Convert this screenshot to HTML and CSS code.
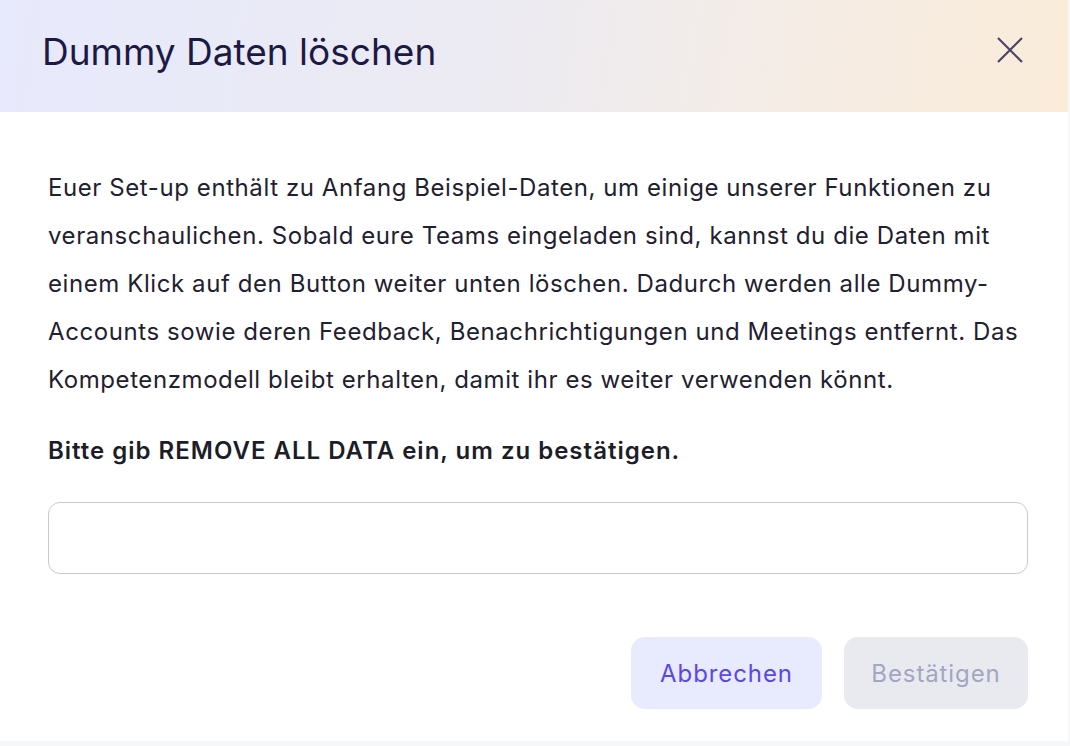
FILE: index.html
```html
<!DOCTYPE html>
<html lang="de">
<head>
<meta charset="utf-8">
<title>Dummy Daten löschen</title>
<link rel="stylesheet" href="styles.css">
</head>
<body>
<div class="modal">
  <header class="modal-header">
    <h1 class="modal-title">Dummy Daten löschen</h1>
    <button class="close-btn" aria-label="Schließen">
      <svg width="26" height="26" viewBox="0 0 26 26"><path d="M1 1L25 25M25 1L1 25" stroke="#4a4568" stroke-width="2.2" fill="none"/></svg>
    </button>
  </header>
  <div class="modal-body">
    <p class="desc">Euer Set-up enthält zu Anfang Beispiel-Daten, um einige unserer Funktionen zu<br>veranschaulichen. Sobald eure Teams eingeladen sind, kannst du die Daten mit<br>einem Klick auf den Button weiter unten löschen. Dadurch werden alle Dummy-<br>Accounts sowie deren Feedback, Benachrichtigungen und Meetings entfernt. Das<br>Kompetenzmodell bleibt erhalten, damit ihr es weiter verwenden könnt.</p>
    <p class="confirm-label">Bitte gib REMOVE ALL DATA ein, um zu bestätigen.</p>
    <input class="confirm-input" type="text">
    <div class="actions">
      <button class="btn btn-cancel">Abbrechen</button>
      <button class="btn btn-confirm" disabled>Bestätigen</button>
    </div>
  </div>
</div>
</body>
</html>
```
FILE: styles.css
```css
* { box-sizing: border-box; }
html, body { margin: 0; padding: 0; }
body {
  background: #f6f7f9;
  font-family: Inter, "Noto Sans", sans-serif;
  width: 1070px;
  height: 746px;
  overflow: hidden;
}
.modal {
  width: 1068px;
  height: 741px;
  background: #ffffff;
  display: flex;
  flex-direction: column;
}
.modal-header {
  height: 112px;
  flex: none;
  background: linear-gradient(100deg, #e7e9fc 0%, #ecebf3 45%, #f6ece2 80%, #fbecd9 100%);
  display: flex;
  align-items: flex-start;
  justify-content: space-between;
  padding: 33px 45px 0 42px;
}
.modal-title {
  margin: 0;
  font-size: 37px;
  line-height: 1;
  font-weight: 400;
  color: #1c1a45;
}
.close-btn {
  border: 0;
  background: none;
  padding: 0;
  width: 26px;
  height: 26px;
  display: flex;
  margin-top: 4px;
}
.modal-body {
  padding: 52px 40px 32px 48px;
  display: flex;
  flex-direction: column;
}
.desc {
  margin: 0;
  font-size: 24px;
  line-height: 48px;
  letter-spacing: 0.58px;
  color: #1f2030;
}
.confirm-label {
  margin: 23px 0 0;
  font-size: 24px;
  line-height: 48px;
  font-weight: 600;
  letter-spacing: 1px;
  color: #1c1d29;
}
.confirm-input {
  margin-top: 27px;
  height: 72px;
  width: 980px;
  border: 1px solid #c9c8d9;
  border-radius: 12px;
  background: #fff;
  font-family: inherit;
  font-size: 20px;
  padding: 0 20px;
}
.actions {
  margin-top: 63px;
  display: flex;
  justify-content: flex-end;
  gap: 22px;
}
.btn {
  height: 72px;
  border: 0;
  border-radius: 14px;
  font-family: inherit;
  font-size: 24px;
  letter-spacing: 0.9px;
  padding: 0;
}
.btn-cancel {
  width: 191px;
  background: #e8eafe;
  color: #5a48e4;
}
.btn-confirm {
  width: 184px;
  background: #e9eaf0;
  color: #a3a6c1;
}
```
